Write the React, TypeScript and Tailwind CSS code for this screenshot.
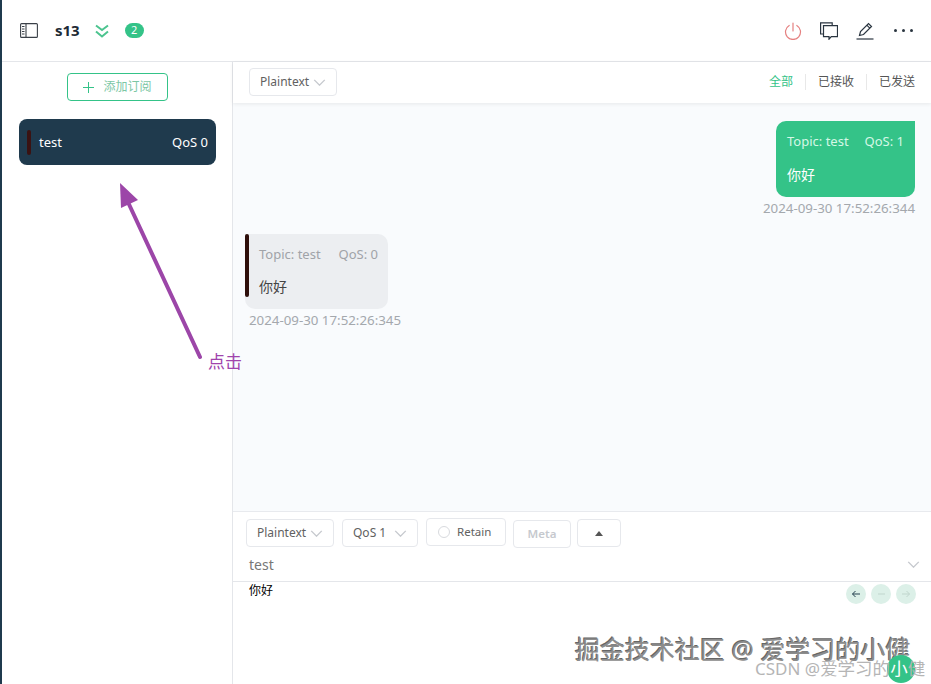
import React from "react";

function Chevron({ className = "" }: { className?: string }) {
  return (
    <svg viewBox="0 0 14 8" className={className} fill="none" stroke="currentColor" strokeWidth="1.6">
      <path d="M1 1l6 6 6-6" />
    </svg>
  );
}

function Sel({ label, w }: { label: string; w: string }) {
  return (
    <div className={`flex items-center justify-between h-[28px] px-[10px] border border-[#e6e8ec] rounded-[4px] text-[12px] text-[#616161] bg-white ${w}`}>
      <span>{label}</span>
      <Chevron className="w-[13px] h-[7px] text-[#c6c9ce]" />
    </div>
  );
}

export default function App() {
  return (
    <div className="relative flex w-[931px] h-[684px] overflow-hidden bg-white font-['Noto_Sans','Noto_Sans_CJK_SC',sans-serif]">
      <div className="w-[2px] shrink-0 bg-[#1f3a4d]" />
      <div className="flex-1 flex flex-col min-w-0">
        {/* Header */}
        <header className="h-[62px] shrink-0 flex items-center border-b border-[#e4e6ea] pl-[18px] pr-[18px]">
          <svg viewBox="0 0 18 15" className="w-[18px] h-[15px] text-[#3a4048]" fill="none" stroke="currentColor" strokeWidth="1.1">
            <rect x="0.6" y="0.6" width="16.8" height="13.8" rx="1" />
            <path d="M6 0.6v13.8M2 3.5h2.5M2 6h2.5M2 8.5h2.5M2 11h2.5" />
          </svg>
          <span className="ml-[17px] text-[15px] font-bold text-[#1d2a35]">s13</span>
          <svg viewBox="0 0 14 14" className="ml-[15px] w-[14px] h-[14px] text-[#4cc48f]" fill="none" stroke="currentColor" strokeWidth="2">
            <path d="M1 1.5l6 4.5 6-4.5M1 7.5l6 5 6-5" />
          </svg>
          <span className="ml-[16px] w-[19px] h-[15px] rounded-full bg-[#34c388] text-white text-[11px] flex items-center justify-center">2</span>
          <div className="ml-auto flex items-center">
            <svg viewBox="0 0 18 18" className="w-[18px] h-[18px] text-[#e58080]" fill="none" stroke="currentColor" strokeWidth="1.2" strokeLinecap="round">
              <path d="M9 1v8M5.2 3.5a7.5 7.5 0 1 0 7.6 0" />
            </svg>
            <svg viewBox="0 0 18 18" className="ml-[18px] w-[18px] h-[18px] text-[#2a3540]" fill="none" stroke="currentColor" strokeWidth="1.2">
              <path d="M3.5 12H0.6V0.8h11.6v2.6" />
              <path d="M3.5 3.6h14v11h-6.2l-2.3 2.6v-2.6H3.5z" />
            </svg>
            <svg viewBox="0 0 18 18" className="ml-[18px] w-[18px] h-[18px] text-[#2a3540]" fill="none" stroke="currentColor" strokeWidth="1.2">
              <path d="M3.5 13.5l1-4L12.5 1.5l3 3-8 8zM10.8 3.2l3 3" />
              <path d="M0.5 17h17" />
            </svg>
            <div className="ml-[20px] flex gap-[5px]">
              <span className="w-[3px] h-[3px] rounded-full bg-[#2a3540]" />
              <span className="w-[3px] h-[3px] rounded-full bg-[#2a3540]" />
              <span className="w-[3px] h-[3px] rounded-full bg-[#2a3540]" />
            </div>
          </div>
        </header>
        <div className="flex-1 flex min-h-0">
          {/* Sidebar */}
          <aside className="w-[231px] shrink-0 border-r border-[#e4e6ea] flex flex-col pl-[17px] pr-[16px] pt-[11px]">
            <button className="self-center w-[101px] h-[28px] border border-[#34c388] rounded-[4px] flex items-center justify-center gap-[9px] text-[12px] text-[#7cc7a5]">
              <svg viewBox="0 0 11 11" className="w-[11px] h-[11px] text-[#34c388]" fill="none" stroke="currentColor" strokeWidth="1"><path d="M5.5 0v11M0 5.5h11" /></svg>
              添加订阅
            </button>
            <div className="mt-[18px] h-[46px] rounded-[8px] bg-[#1f3a4d] flex items-center pl-[8px] pr-[8px] text-[13px] text-white">
              <span className="w-[4px] h-[25px] rounded-[2px] bg-[#3a1212]" />
              <span className="ml-[8px] pt-[1px]">test</span>
              <span className="ml-auto pt-[1px]">QoS 0</span>
            </div>
          </aside>
          {/* Main */}
          <main className="flex-1 min-w-0 flex flex-col bg-[#f9fbfd]">
            <div className="h-[41px] shrink-0 bg-white flex items-center pl-[16px] pr-[16px] pb-[1px] shadow-[0_1px_4px_rgba(0,0,0,0.08)] z-10">
              <Sel label="Plaintext" w="w-[88px]" />
              <div className="ml-auto flex items-center text-[12px] text-[#555]">
                <span className="text-[#34c388] pr-[12px] border-r border-[#e8e8e8] leading-[16px]">全部</span>
                <span className="px-[12px] border-r border-[#e8e8e8] leading-[16px]">已接收</span>
                <span className="pl-[12px] leading-[16px]">已发送</span>
              </div>
            </div>
            <div className="flex-1 min-h-0 flex flex-col pl-[15px] pr-[16px] pt-[18px]">
              <div className="self-end flex flex-col items-end">
                <div className="w-[139px] h-[76px] rounded-[10px] rounded-tr-none bg-[#34c388] px-[11px] pt-[11px]">
                  <div className="flex justify-between text-[13px] text-[#d5f7e6]"><span>Topic: test</span><span>QoS: 1</span></div>
                  <div className="mt-[12px] text-[14px] text-white">你好</div>
                </div>
                <div className="mt-[2px] text-[13.3px] text-[#a4a8ad] leading-[18px]">2024-09-30 17:52:26:344</div>
              </div>
              <div className="self-start mt-[17px] -ml-[3px]">
                <div className="relative w-[143px] h-[75px] rounded-[10px] rounded-tl-none bg-[#eceef1] pl-[14px] pr-[10px] pt-[11px]">
                  <span className="absolute left-0 top-0 w-[4px] h-[63px] rounded-[2px] bg-[#2e0f0b]" />
                  <div className="flex justify-between text-[13px] text-[#a0a3a8]"><span>Topic: test</span><span>QoS: 0</span></div>
                  <div className="mt-[11px] text-[14px] text-[#444]">你好</div>
                </div>
                <div className="mt-[2px] ml-[4px] text-[13.3px] text-[#a4a8ad] leading-[18px] whitespace-nowrap">2024-09-30 17:52:26:345</div>
              </div>
            </div>
            {/* Composer */}
            <div className="h-[173px] shrink-0 bg-white border-t border-[#e8eaee] flex flex-col">
              <div className="flex items-start pl-[13px] pt-[7px] gap-[8px]">
                <Sel label="Plaintext" w="w-[88px]" />
                <Sel label="QoS 1" w="w-[76px]" />
                <div className="w-[80px] h-[28px] -mt-[1px] border border-[#e6e8ec] rounded-[4px] flex items-center pl-[11px] text-[11.5px] text-[#616161]">
                  <span className="w-[12px] h-[12px] rounded-full border border-[#d8dade]" />
                  <span className="ml-[7px]">Retain</span>
                </div>
                <div className="w-[58px] h-[28px] mt-[1px] -ml-[1px] border border-[#e6e8ec] rounded-[4px] flex items-center justify-center text-[11.5px] font-semibold text-[#c6c9ce]">Meta</div>
                <div className="-ml-[2px] w-[44px] h-[28px] border border-[#e6e8ec] rounded-[4px] flex items-center justify-center">
                  <svg viewBox="0 0 8 5" className="w-[8px] h-[5px] text-[#555]" fill="currentColor"><path d="M4 0l4 5H0z" /></svg>
                </div>
              </div>
              <div className="h-[34px] flex items-center justify-between border-b border-[#e4e6ea] pl-[16px] pr-[11px] text-[14px] text-[#777]">
                <span>test</span>
                <Chevron className="w-[13px] h-[7px] text-[#c6c9ce]" />
              </div>
              <div className="relative flex-1 pl-[16px] text-[12px] text-black leading-[18px]">
                你好
                <div className="absolute right-[15px] top-[2px] flex gap-[5px]">
                  {["M9 5H1.5M4.5 2L1.5 5l3 3", "M2 5h7", "M1 5h7.5M5.5 2l3 3-3 3"].map((d, i) => (
                    <span key={d} className="w-[20px] h-[20px] rounded-full bg-[#dcf0e8] flex items-center justify-center">
                      <svg viewBox="0 0 10 10" className={`w-[10px] h-[10px] ${i === 0 ? "text-[#24404f]" : "text-[#c0d6cd]"}`} fill="none" stroke="currentColor" strokeWidth="1"><path d={d} /></svg>
                    </span>
                  ))}
                </div>
              </div>
            </div>
          </main>
        </div>
      </div>

      {/* Annotation overlay */}
      <svg viewBox="0 0 931 684" className="absolute inset-0 w-[931px] h-[684px] pointer-events-none" fill="none">
        <path d="M200 357L127 200" stroke="#9c46a8" strokeWidth="4" strokeLinecap="round" />
        <path d="M120 183L138 200L121 208z" fill="#9c46a8" />
      </svg>
      <span className="absolute left-[208px] top-[351px] text-[17px] leading-[22px] text-[#a043ad]">点击</span>

      {/* Watermarks */}
      <span className="absolute left-[575px] top-[633px] text-[25px] leading-[32px] text-[#8c8c8c] whitespace-nowrap [text-shadow:1px_1px_0_#fff,-1px_-1px_0_#666]">掘金技术社区 @ 爱学习的小健</span>
      <span className="absolute left-[887px] top-[655px] w-[28px] h-[28px] rounded-full bg-[#34c388]" />
      <div className="absolute left-[755px] top-[657px] leading-[22px] text-[#b5b5b5] whitespace-nowrap">
        <span className="text-[17px]">CSDN @</span>
        <span className="text-[17.5px]">爱学习的<span className="text-white">小</span>健</span>
      </div>
    </div>
  );
}
